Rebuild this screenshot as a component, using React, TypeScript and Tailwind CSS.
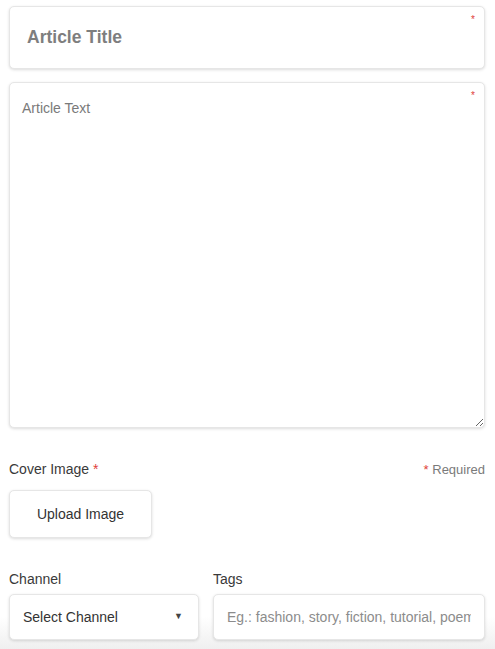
import React from "react";

const Star = () => <span className="text-[#e0413a]">*</span>;

const App = () => {
  return (
    <div className="min-h-[649px] bg-[linear-gradient(to_bottom,#ffffff_95%,#efefef)] px-[9px] pr-[10px] pt-[6px] font-['Liberation_Sans',Arial,sans-serif] text-[#333]">
      <div className="relative">
        <input
          type="text"
          placeholder="Article Title"
          className="h-[63px] w-full rounded-[5px] border border-[#e6e6e6] bg-white pl-[17px] text-[17.5px] font-bold text-[#555] shadow-[0_1px_3px_rgba(0,0,0,0.14)] outline-none placeholder:text-[#7e7e7e]"
        />
        <span className="absolute right-[10px] top-[9px] text-[10px] leading-none text-[#e0413a]">*</span>
      </div>

      <div className="relative mt-[13px]">
        <textarea
          placeholder="Article Text"
          className="block h-[346px] w-full resize-y rounded-[5px] border border-[#e6e6e6] bg-white px-[12px] pt-[15px] text-[14px] text-[#555] shadow-[0_1px_3px_rgba(0,0,0,0.14)] outline-none placeholder:text-[#7a7a7a]"
        />
        <span className="absolute right-[10px] top-[9px] text-[10px] leading-none text-[#e0413a]">*</span>
      </div>

      <div className="mt-[31px] flex items-center justify-between">
        <label className="text-[14px] font-medium text-[#3a3a3a]">
          Cover Image <Star />
        </label>
        <span className="text-[13px] text-[#7a7a7a]">
          <Star /> Required
        </span>
      </div>

      <button className="mt-[10px] h-[48px] w-[143px] rounded-[5px] border border-[#e6e6e6] bg-white text-[14px] text-[#333] shadow-[0_1px_3px_rgba(0,0,0,0.14)]">
        Upload Image
      </button>

      <div className="mt-[31px] flex gap-[14px]">
        <div className="w-[190px]">
          <label className="block text-[14px] font-medium text-[#3a3a3a]">Channel</label>
          <div className="mt-[4px] flex h-[46px] items-center justify-between rounded-[5px] border border-[#e6e6e6] bg-white pl-[13px] pr-[15px] text-[14px] text-[#333] shadow-[0_1px_3px_rgba(0,0,0,0.14)]">
            <span>Select Channel</span>
            <span className="text-[9px] text-[#444]">▼</span>
          </div>
        </div>
        <div className="flex-1">
          <label className="block text-[14px] font-medium text-[#3a3a3a]">Tags</label>
          <input
            type="text"
            placeholder="Eg.: fashion, story, fiction, tutorial, poem"
            className="mt-[4px] h-[46px] w-full rounded-[5px] border border-[#e6e6e6] bg-white px-[13px] text-[14px] text-[#333] shadow-[0_1px_3px_rgba(0,0,0,0.14)] outline-none placeholder:text-[#8c8c8c]"
          />
        </div>
      </div>
    </div>
  );
};

export default App;
